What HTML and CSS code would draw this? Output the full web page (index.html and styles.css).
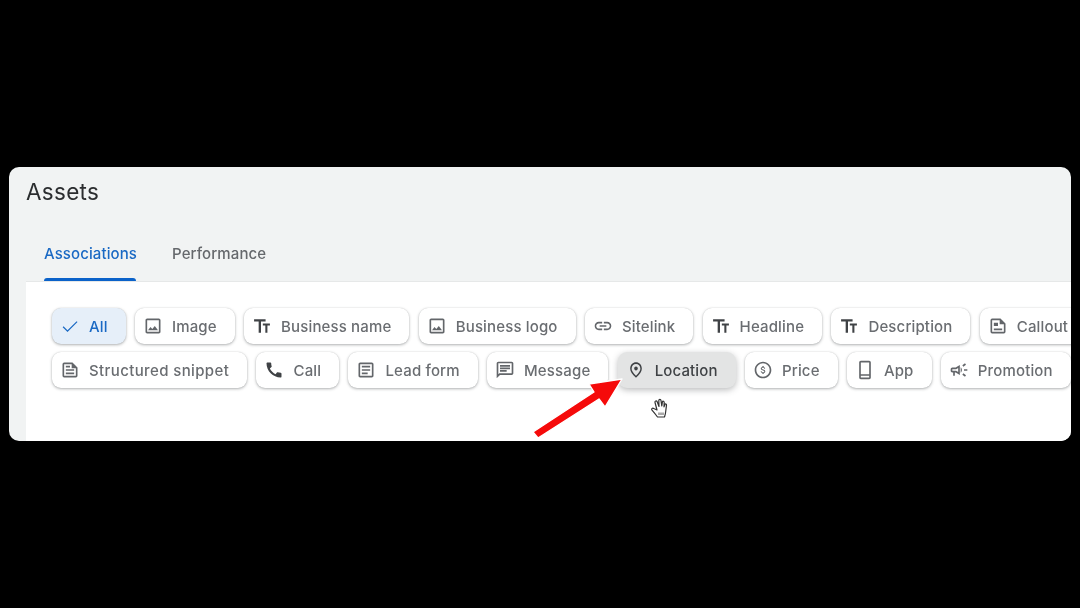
FILE: index.html
```html
<!DOCTYPE html>
<html lang="en">

<head>
    <meta charset="UTF-8">
    <title>Assets</title>
    <link rel="stylesheet" href="styles.css">
</head>

<body>
    <svg class="defs" width="0" height="0">
        <symbol id="i-check" viewBox="0 0 24 24"><path d="M9 17.2 4.2 12.4l-1 1L9 19.2 21 7.2l-1-1z"/></symbol>
        <symbol id="i-image" viewBox="0 0 24 24"><path d="M19 5v14H5V5h14m0-2H5c-1.1 0-2 .9-2 2v14c0 1.1.9 2 2 2h14c1.1 0 2-.9 2-2V5c0-1.1-.9-2-2-2zm-4.86 8.86l-3 3.87L9 13.14 6 17h12l-3.86-5.14z"/></symbol>
        <symbol id="i-text" viewBox="0 0 24 24"><path d="M2.500 4v2.500h5.500V20h2.800V6.500h5.500V4h-13.800zm19 5h-8.500v2.300h3V20h2.500v-8.700h3V9z"/></symbol>
        <symbol id="i-link" viewBox="0 0 24 24"><path d="M3.9 12c0-1.71 1.39-3.1 3.1-3.1h4V7H7c-2.76 0-5 2.24-5 5s2.24 5 5 5h4v-1.9H7c-1.71 0-3.1-1.39-3.1-3.1zM8 13h8v-2H8v2zm9-6h-4v1.9h4c1.71 0 3.1 1.39 3.1 3.1s-1.39 3.1-3.1 3.1h-4V17h4c2.76 0 5-2.24 5-5s-2.24-5-5-5z"/></symbol>
        <symbol id="i-doc" viewBox="0 0 24 24"><path d="M5 3h10l6 6v10a2 2 0 0 1-2 2H5a2 2 0 0 1-2-2V5a2 2 0 0 1 2-2zm0 2v14h14V10h-5V5H5zm2 2h5v2H7zm0 4h10v2H7zm0 4h10v2H7z"/></symbol>
        <symbol id="i-callout" viewBox="0 0 24 24"><path d="M5 3h10l6 6v10a2 2 0 0 1-2 2H5a2 2 0 0 1-2-2V5a2 2 0 0 1 2-2zm0 2v14h14V10h-5V5H5zm2 3h5v4H7zm0 7h10v2H7z"/></symbol>
        <symbol id="i-call" viewBox="0 0 24 24"><path d="M20.01 15.38c-1.23 0-2.42-.2-3.53-.56-.35-.12-.74-.03-1.01.24l-1.57 1.97c-2.83-1.35-5.48-3.9-6.89-6.83l1.95-1.66c.27-.28.35-.67.24-1.02-.37-1.11-.56-2.3-.56-3.53 0-.54-.45-.99-.99-.99H4.19C3.65 3 3 3.24 3 3.99 3 13.28 10.73 21 20.01 21c.71 0 .99-.63.99-1.18v-3.45c0-.54-.45-.99-.99-.99z"/></symbol>
        <symbol id="i-form" viewBox="0 0 24 24"><path d="M19 5v14H5V5h14m0-2H5c-1.1 0-2 .9-2 2v14c0 1.1.9 2 2 2h14c1.1 0 2-.9 2-2V5c0-1.1-.9-2-2-2zm-5 14H7v-2h7v2zm3-4H7v-2h10v2zm0-4H7V7h10v2z"/></symbol>
        <symbol id="i-message" viewBox="0 0 24 24"><path d="M20 2H4c-1.1 0-2 .9-2 2v18l4-4h14c1.1 0 2-.9 2-2V4c0-1.1-.9-2-2-2zm0 14H5.17L4 17.17V4h16v12zM6 12h8v2H6zm0-3h12v2H6zm0-3h12v2H6z"/></symbol>
        <symbol id="i-place" viewBox="0 0 24 24"><path transform="translate(1.5 1) scale(.875 .92)" d="M12 12.500c-1.400 0-2.500-1.100-2.500-2.500s1.100-2.500 2.500-2.500 2.500 1.100 2.500 2.500-1.100 2.500-2.500 2.500zm6-2.300C18 6.570 15.350 4 12 4s-6 2.570-6 6.200c0 2.340 1.950 5.440 6 9.140 4.050-3.700 6-6.800 6-9.140zM12 2c4.200 0 8 3.220 8 8.200 0 3.320-2.670 7.250-8 11.800-5.330-4.550-8-8.480-8-11.800C4 5.220 7.800 2 12 2z"/></symbol>
        <symbol id="i-price" viewBox="0 0 24 24"><path d="M12 2C6.480 2 2 6.480 2 12s4.480 10 10 10 10-4.480 10-10S17.520 2 12 2zm0 18c-4.410 0-8-3.590-8-8s3.590-8 8-8 8 3.590 8 8-3.590 8-8 8z"/><path transform="translate(3.600 3.600) scale(.7)" d="M12.310 11.140c-1.770-.45-2.340-.94-2.340-1.670 0-.84.790-1.430 2.100-1.430 1.380 0 1.900.660 1.940 1.640h1.710c-.050-1.340-.870-2.570-2.490-2.970V5H10.900v1.690c-1.510.320-2.720 1.300-2.720 2.810 0 1.790 1.490 2.690 3.660 3.210 1.950.460 2.340 1.150 2.340 1.870 0 .530-.390 1.390-2.100 1.390-1.600 0-2.230-.720-2.320-1.640H8.040c.100 1.700 1.360 2.660 2.860 2.970V19h2.340v-1.670c1.520-.290 2.720-1.160 2.730-2.770-.010-2.200-1.900-2.960-3.660-3.420z"/></symbol>
        <symbol id="i-app" viewBox="0 0 24 24"><path d="M17 1H7c-1.100 0-2 .9-2 2v18c0 1.100.9 2 2 2h10c1.100 0 2-.9 2-2V3c0-1.100-.9-2-2-2zM7 3h10v14H7V3zm0 16h10v2H7v-2z"/></symbol>
        <symbol id="i-promo" viewBox="0 0 24 24"><path d="M18 11v2h4v-2h-4zm-2 6.61c.96.71 2.21 1.65 3.2 2.39.4-.53.8-1.07 1.2-1.6-.99-.74-2.24-1.68-3.2-2.4-.4.54-.8 1.08-1.2 1.61zM20.4 5.6c-.4-.53-.8-1.07-1.2-1.6-.99.74-2.24 1.68-3.2 2.4.4.53.8 1.07 1.2 1.6.96-.72 2.21-1.65 3.2-2.4zM4 9c-1.1 0-2 .9-2 2v2c0 1.1.9 2 2 2h1v4h2v-4h1l5 3V6L8 9H4zm5.03 1.71L11 9.53v4.94l-1.97-1.18-.48-.29H4v-2h4.55l.48-.29zM15.5 12c0-1.33-.58-2.53-1.5-3.35v6.69c.92-.81 1.5-2.01 1.5-3.34z"/></symbol>
    </svg>

    <div class="panel">
        <h1 class="title">Assets</h1>

        <div class="tabs">
            <div class="tab active">Associations</div>
            <div class="tab">Performance</div>
        </div>

        <div class="content">
            <div class="chiprow">
                <div class="chip selected"><svg class="icon"><use href="#i-check"/></svg>All</div>
                <div class="chip"><svg class="icon"><use href="#i-image"/></svg>Image</div>
                <div class="chip"><svg class="icon dark"><use href="#i-text"/></svg>Business name</div>
                <div class="chip"><svg class="icon"><use href="#i-image"/></svg>Business logo</div>
                <div class="chip"><svg class="icon"><use href="#i-link"/></svg>Sitelink</div>
                <div class="chip"><svg class="icon dark"><use href="#i-text"/></svg>Headline</div>
                <div class="chip"><svg class="icon dark"><use href="#i-text"/></svg>Description</div>
                <div class="chip"><svg class="icon"><use href="#i-callout"/></svg>Callout</div>
            </div>
            <div class="chiprow">
                <div class="chip wide"><svg class="icon"><use href="#i-doc"/></svg>Structured snippet</div>
                <div class="chip"><svg class="icon dark"><use href="#i-call"/></svg>Call</div>
                <div class="chip"><svg class="icon"><use href="#i-form"/></svg>Lead form</div>
                <div class="chip"><svg class="icon"><use href="#i-message"/></svg>Message</div>
                <div class="chip hovered"><svg class="icon dark"><use href="#i-place"/></svg>Location</div>
                <div class="chip"><svg class="icon"><use href="#i-price"/></svg>Price</div>
                <div class="chip"><svg class="icon"><use href="#i-app"/></svg>App</div>
                <div class="chip"><svg class="icon"><use href="#i-promo"/></svg>Promotion</div>
            </div>
        </div>

        <!-- red arrow and hand cursor sit on top of the chips -->
        <svg class="arrow" width="100" height="66" viewBox="0 0 100 66">
            <polygon points="2,56 63,16 58,8 91,3 74,31 68,23 7,62" fill="#f50a0a" stroke="#fff" stroke-width="1.4" stroke-linejoin="round"/>
        </svg>
        <svg class="hand" width="18" height="22" viewBox="0 0 18 22">
            <path d="M7 13 5 5.500C4.700 4 6.500 3.300 7.200 4.800L9 9.500 8.800 3.500C8.900 2 10.800 2 11 3.500L11.800 9 12.400 5C12.800 3.700 14.300 4.200 14.200 5.500L14 9.800 14.900 7.500C15.500 6.500 16.700 7 16.500 8.200L15.700 14.500C15.500 17 15 18.500 14.500 20H7.500C6 18 4 15.500 2 13.200 1 11.800 2.500 10.500 3.800 11.500Z" fill="#fff" stroke="#333" stroke-width="1.200" stroke-linejoin="round"/>
            <path d="M9 15.500v2.500M11 15.500v2.500M13 15.500v2.500" stroke="#555" stroke-width="1"/>
        </svg>
    </div>
</body>

</html>
```

FILE: styles.css
```css
* {
    margin: 0;
    padding: 0;
    box-sizing: border-box;
}

body {
    background-color: #000;
    height: 608px;
    padding: 167px 9px 0;
    overflow: hidden;
    font-family: "Inter", "Liberation Sans", sans-serif;
}

.defs {
    display: block;
    height: 0;
}

.panel {
    position: relative;
    height: 274px;
    background-color: #f1f3f3;
    border-radius: 10px;
    overflow: hidden;
    filter: blur(0.4px);
}

.title {
    padding: 11px 0 0 17px;
    height: 62px;
    font-size: 22.5px;
    font-weight: 400;
    line-height: 28px;
    letter-spacing: 0.3px;
    color: #2b2d2f;
}

.tabs {
    display: flex;
    height: 52px;
    padding-left: 35px;
    gap: 35px;
}

.tab {
    position: relative;
    height: 52px;
    padding-top: 15px;
    font-size: 15px;
    line-height: 20px;
    font-weight: 500;
    letter-spacing: 0.1px;
    color: #65686c;
}

.tab.active {
    color: #1a69c4;
}

.tab.active::after {
    content: "";
    position: absolute;
    left: 0;
    right: 1px;
    bottom: 0;
    height: 3px;
    background-color: #0b62c9;
    border-radius: 3px 3px 0 0;
}

.content {
    margin-left: 17px;
    height: 160px;
    padding: 26px 0 0 26px;
    background-color: #fff;
    border-top: 1px solid #e6e8e8;
    display: flex;
    flex-direction: column;
    gap: 8px;
}

.chiprow {
    display: flex;
    gap: 9.3px;
}

.chip {
    flex: none;
    display: flex;
    align-items: center;
    gap: 9px;
    height: 36px;
    padding: 0 18px 0 8px;
    background-color: #fff;
    border-radius: 9px;
    font-size: 15px;
    font-weight: 500;
    letter-spacing: 0.15px;
    color: #6a6d71;
    box-shadow: 0 1px 3px rgba(60, 64, 67, 0.4), 0 0 1px rgba(60, 64, 67, 0.2);
}

.chip.wide {
    letter-spacing: 0.38px;
}

.chip.selected {
    background-color: #e6eff9;
    color: #1a69c4;
}

.chip.hovered {
    background-color: #e3e4e4;
    color: #3f4245;
    box-shadow: 0 2px 6px rgba(60, 64, 67, 0.35);
}

.icon {
    flex: none;
    width: 20px;
    height: 20px;
    fill: #63666a;
}

.icon.dark {
    fill: #3f4245;
}

.selected .icon {
    fill: #1a69c4;
}

.arrow {
    position: absolute;
    left: 522px;
    top: 209px;
}

.hand {
    position: absolute;
    left: 641px;
    top: 230px;
}
```
